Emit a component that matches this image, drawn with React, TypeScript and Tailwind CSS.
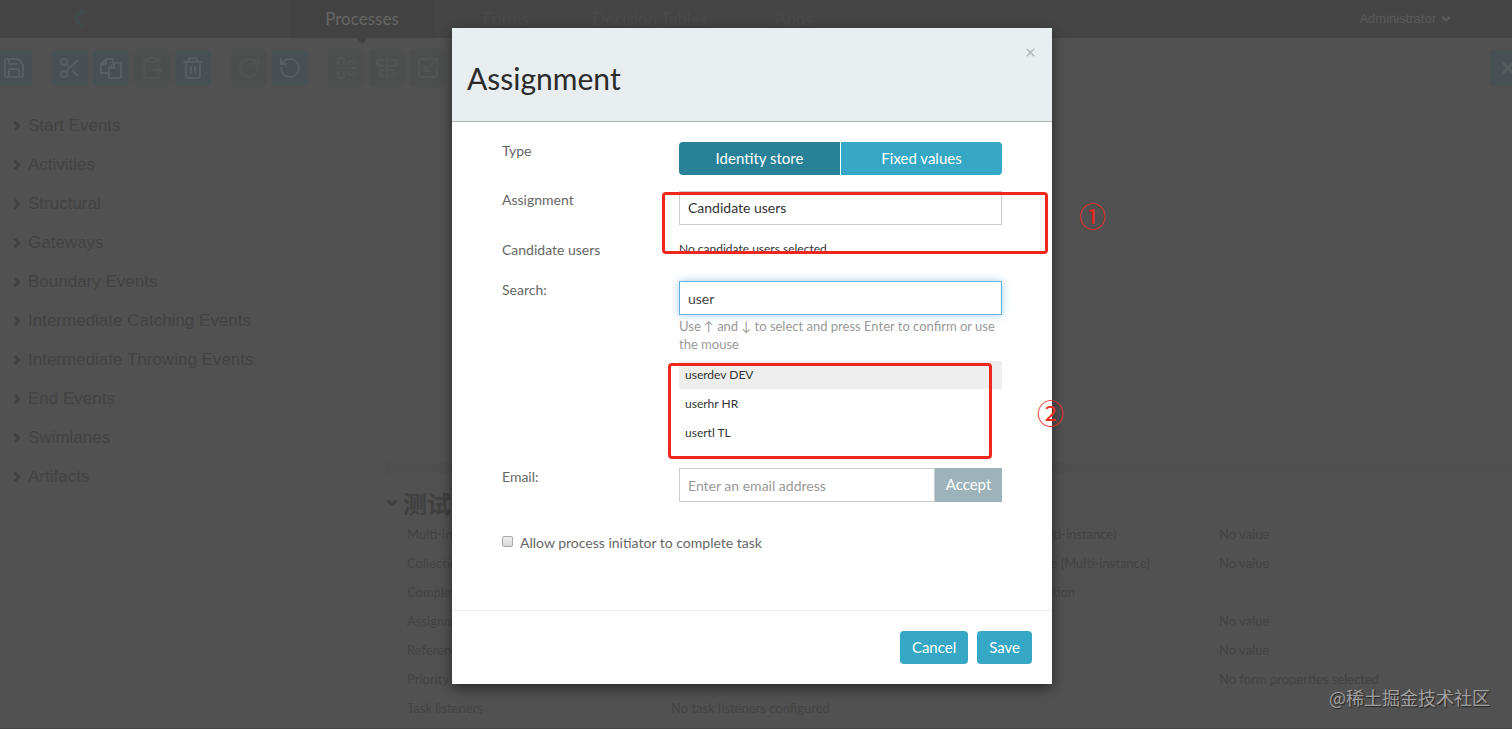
import { useState } from "react";
import type { ReactNode } from "react";
import {
  AlignCenterHorizontal,
  AlignCenterVertical,
  ChevronDown,
  ChevronRight,
  ClipboardPaste,
  RotateCcw,
  RotateCw,
  Save,
  Scaling,
  Scissors,
  Trash2,
  X,
} from "lucide-react";

function CopyIcon({ size }: { size: number }) {
  return (
    <svg width={size} height={size} viewBox="0 0 24 24" fill="none" stroke="currentColor" strokeWidth="2" strokeLinejoin="round">
      <path d="M9 17H2V8l5-5h7v4" />
      <path d="M7 3v5H2" />
      <path d="M10 12l5-5h7v15H10z" />
      <path d="M15 7v5h-5" />
    </svg>
  );
}

const toolGroups = [
  [{ label: "Save model", icon: Save, enabled: true }],
  [
    { label: "Cut", icon: Scissors, enabled: true },
    { label: "Copy", icon: CopyIcon, enabled: true },
    { label: "Paste", icon: ClipboardPaste, enabled: false },
    { label: "Delete", icon: Trash2, enabled: true },
  ],
  [
    { label: "Redo", icon: RotateCw, enabled: false },
    { label: "Undo", icon: RotateCcw, enabled: true },
  ],
  [
    { label: "Align vertical", icon: AlignCenterHorizontal, enabled: false },
    { label: "Align horizontal", icon: AlignCenterVertical, enabled: false },
    { label: "Same size", icon: Scaling, enabled: false },
  ],
];

const stencilGroups = [
  "Start Events",
  "Activities",
  "Structural",
  "Gateways",
  "Boundary Events",
  "Intermediate Catching Events",
  "Intermediate Throwing Events",
  "End Events",
  "Swimlanes",
  "Artifacts",
];

const properties = [
  ["Multi-instance type", "", "Cardinality (Multi-instance)", "No value"],
  ["Collection (Multi-instance)", "", "Element variable (Multi-instance)", "No value"],
  ["Completion condition", "", "Is for compensation", ""],
  ["Assignments", "", "", "No value"],
  ["Reference", "", "", "No value"],
  ["Priority", "", "", "No form properties selected"],
  ["Task listeners", "No task listeners configured", "", ""],
];

const users = ["userdev DEV", "userhr HR", "usertl TL"];

function Editor() {
  return (
    <div className="flex h-screen flex-col overflow-hidden border-b border-[#444444] bg-[#515151] font-['Liberation_Sans',sans-serif]">
      <header className="flex h-[38px] shrink-0 items-center bg-[#454545] pr-[60px]">
        <svg viewBox="0 0 20 20" className="ml-[70px] size-5 text-[#424b4e]" fill="none" stroke="currentColor" strokeWidth="3">
          <path d="M14 2 5 9l7 8" />
        </svg>
        <nav className="ml-[200px] flex h-full text-center font-['Lato',sans-serif] text-[17px] text-[#4a4a4a]">
          <a href="#processes" className="relative w-36 bg-[#424242] pt-1.5 text-[#666666]">
            Processes
            <span className="absolute top-full left-1/2 -translate-x-1/2 border-x-[6px] border-t-[6px] border-x-transparent border-t-[#424242]" />
          </a>
          <a href="#forms" className="w-36 pt-1.5">
            Forms
          </a>
          <a href="#decision-tables" className="w-36 pt-1.5">
            Decision Tables
          </a>
          <a href="#apps" className="w-36 pt-1.5">
            Apps
          </a>
        </nav>
        <button className="ml-auto flex items-center gap-1 text-[13px] text-[#5a5a5a]">
          Administrator <ChevronDown size={12} strokeWidth={5} />
        </button>
      </header>

      <div className="flex shrink-0 items-center pt-3">
        <div className="-ml-1 flex gap-5">
          {toolGroups.map((group, i) => (
            <div key={i} className="flex gap-[5px]">
              {group.map(({ label, icon: Icon, enabled }) => (
                <button
                  key={label}
                  aria-label={label}
                  className={
                    enabled
                      ? "grid size-9 place-items-center rounded-sm bg-[#475052] text-[#555e60]"
                      : "grid size-9 place-items-center rounded-sm bg-[#4d4f4f] text-[#525454]"
                  }
                >
                  <Icon size={24} />
                </button>
              ))}
            </div>
          ))}
        </div>
        <button aria-label="Close editor" className="-mr-3.5 ml-auto grid size-9 place-items-center rounded-sm bg-[#475052] text-[#555e60]">
          <X size={20} strokeWidth={3} />
        </button>
      </div>

      <div className="flex min-h-0 flex-1">
        <ul className="w-[375px] shrink-0 pt-5 pl-2.5">
          {stencilGroups.map((name) => (
            <li key={name} className="flex h-[39px] items-center gap-1 text-[17px] text-[#434343]">
              <ChevronRight size={14} strokeWidth={5} />
              {name}
            </li>
          ))}
        </ul>
        <section className="flex flex-1 flex-col justify-end">
          <div className="h-[266px] pl-2.5">
            <div className="h-3 bg-[#4f4f4f]" />
            <h2 className="flex h-[46px] items-center gap-1 pt-3 font-['Noto_Sans_CJK_SC',sans-serif] text-2xl font-bold text-[#404040]">
              <ChevronDown size={14} strokeWidth={5} />
              测试
            </h2>
            <table className="w-full table-fixed text-left font-['Lato',sans-serif] text-[13px] text-[#444444]">
              <tbody>
                {properties.map(([name, value, otherName, otherValue]) => (
                  <tr key={name} className="h-[29px]">
                    <th className="w-[286px] pl-[22px] font-normal">{name}</th>
                    <td className="w-[292px]">{value}</td>
                    <td className="w-[256px]">{otherName}</td>
                    <td>{otherValue}</td>
                  </tr>
                ))}
              </tbody>
            </table>
          </div>
        </section>
      </div>
    </div>
  );
}

function Row({ label, htmlFor, className, children }: { label: string; htmlFor?: string; className: string; children: ReactNode }) {
  return (
    <div className={`flex ${className}`}>
      <label htmlFor={htmlFor} className="w-[177px] shrink-0 leading-[18px] text-[#666666]">
        {label}
      </label>
      <div className="flex-1">{children}</div>
    </div>
  );
}

function AssignmentDialog() {
  const [search, setSearch] = useState("user");

  return (
    <div
      role="dialog"
      aria-labelledby="dialog-title"
      className="relative w-full max-w-[600px] bg-white font-['Lato',sans-serif] text-sm text-[#333333] shadow-[0_4px_12px_rgba(0,0,0,0.5)]"
    >
      <header className="flex h-[94px] items-start justify-between border-b border-[#aeb4b7] bg-[#e8edf0] px-[15px]">
        <h1 id="dialog-title" className="pt-8 text-3xl text-[#2b2b2b]">
          Assignment
        </h1>
        <button aria-label="Close" className="mt-[18px] text-[#b4b8ba]">
          <X size={13} strokeWidth={3} />
        </button>
      </header>

      <form className="px-[50px]">
        <Row label="Type" className="h-[69px] pt-5">
          <div className="flex gap-px text-[15px] text-white">
            <button type="button" className="h-[33px] flex-1 rounded-l-sm bg-[#298198]">
              Identity store
            </button>
            <button type="button" className="h-[33px] flex-1 rounded-r-sm bg-[#36a7c4]">
              Fixed values
            </button>
          </div>
        </Row>
        <Row label="Assignment" htmlFor="assignment" className="h-[50px]">
          <select id="assignment" className="h-[34px] w-full appearance-none border border-[#cccccc] bg-white px-2 outline-none">
            <option>Candidate users</option>
          </select>
        </Row>
        <Row label="Candidate users" className="h-10">
          <p className="text-xs">No candidate users selected...</p>
        </Row>
        <Row label="Search:" htmlFor="search" className="">
          <input
            id="search"
            value={search}
            onChange={(e) => setSearch(e.target.value)}
            className="h-[34px] w-full border border-[#66afe9] bg-white px-2 text-[#444444] shadow-[0_0_8px_rgba(102,175,233,0.6)] outline-none"
          />
          <p className="mt-0.5 text-[13px] leading-[18px] text-[#999999]">
            Use ↑ and ↓ to select and press Enter to confirm or use the mouse
          </p>
          <ul className="mt-2 h-[107px] text-xs">
            {users.map((user) => (
              <li key={user} className="mb-px h-7 px-1.5 leading-7 first:bg-[#eeeeee]">
                {user}
              </li>
            ))}
          </ul>
        </Row>
        <Row label="Email:" htmlFor="email" className="h-[66px]">
          <div className="flex">
            <input
              id="email"
              placeholder="Enter an email address"
              className="h-[34px] min-w-0 flex-1 border border-[#cccccc] px-2 outline-none placeholder:text-[#999999]"
            />
            <button type="button" className="h-[34px] w-[67px] bg-[#9bb3b9] text-[15px] text-white">
              Accept
            </button>
          </div>
        </Row>
        <label className="flex h-[76px] items-start gap-[7px] leading-[18px] text-[#666666]">
          <input
            type="checkbox"
            className="mt-0.5 size-[11px] appearance-none rounded-xs border border-[#a8a8a8] bg-linear-to-b from-[#eeeeee] to-[#d9d9d9]"
          />
          Allow process initiator to complete task
        </label>
      </form>

      <footer className="flex h-[74px] items-center justify-end gap-[9px] border-t border-[#eeeeee] px-5 text-[15px] text-white">
        <button className="h-[33px] rounded-sm bg-[#36a7c4] px-3">Cancel</button>
        <button className="h-[33px] rounded-sm bg-[#36a7c4] px-3">Save</button>
      </footer>

      {/* callouts */}
      <div className="pointer-events-none font-['Noto_Sans_CJK_SC',sans-serif] text-[27px] leading-8 text-[#f0281c]">
        <div className="absolute top-[164px] left-[210px] h-[62px] w-[386px] rounded border-[3px] border-[#f0281c]" />
        <span className="absolute top-[172px] left-[627px]">①</span>
        <div className="absolute top-[335px] left-[216px] h-[96px] w-[324px] rounded border-[3px] border-[#f0281c]" />
        <span className="absolute top-[369px] left-[585px]">②</span>
      </div>
    </div>
  );
}

export default function App() {
  return (
    <div className="relative">
      <Editor />
      <div className="absolute inset-0 flex items-start justify-center pt-7 pr-2">
        <AssignmentDialog />
      </div>
      <span className="absolute right-[22px] bottom-5 font-['Noto_Sans_CJK_SC',sans-serif] text-lg leading-6 text-[#a0a0a0] [text-shadow:1px_1px_1px_#222222]">
        @稀土掘金技术社区
      </span>
    </div>
  );
}
